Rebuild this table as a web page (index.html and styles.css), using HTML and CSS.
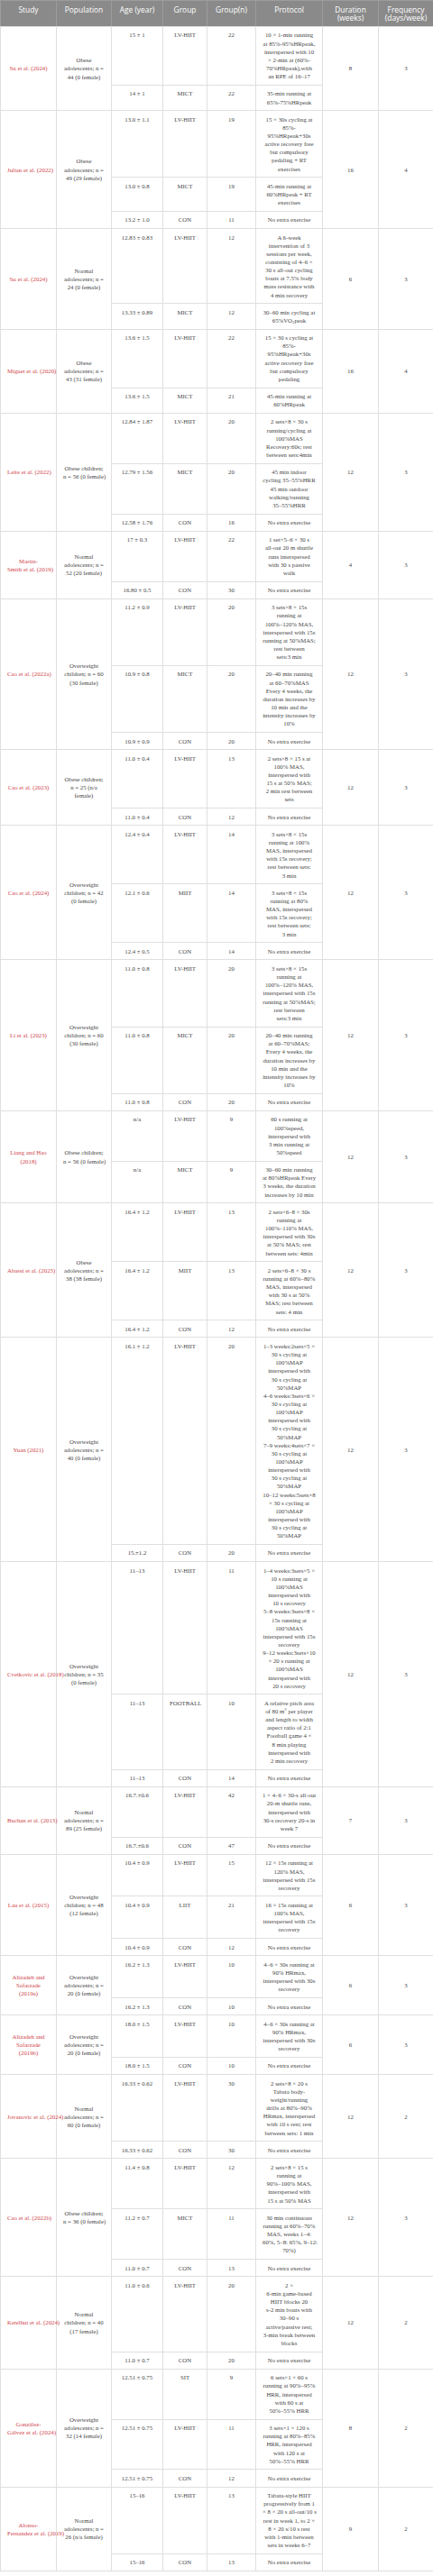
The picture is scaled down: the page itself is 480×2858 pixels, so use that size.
FILE: index.html
```html
<!DOCTYPE html>
<html lang="en">
<head>
<meta charset="utf-8">
<title>Study characteristics</title>
<link rel="stylesheet" href="styles.css">
</head>
<body>
<table class="t">
<colgroup>
<col class="w62"><col class="w61"><col class="w57"><col class="w49"><col class="w54"><col class="w74"><col class="w62"><col class="w61">
</colgroup>
<thead>
<tr><th>Study</th><th>Population</th><th>Age (year)</th><th>Group</th><th>Group(n)</th><th>Protocol</th><th>Duration<br>(weeks)</th><th>Frequency<br>(days/week)</th></tr>
</thead>
<tbody>
<tr><td rowspan="2" class="mid"><span class="ref">Su et al. (2024)</span></td><td rowspan="2" class="mid">Obese<br>adolescents; n =<br>44 (0 female)</td><td>15 ± 1</td><td>LV-HIIT</td><td>22</td><td>10 × 1-min running<br>at 85%-95%HRpeak,<br>interspersed with 10<br>× 2-min at (60%-<br>70%HRpeak),with<br>an RPE of 16–17</td><td rowspan="2" class="mid">8</td><td rowspan="2" class="mid">3</td></tr>
<tr><td>14 ± 1</td><td>MICT</td><td>22</td><td>35-min running at<br>65%-75%HRpeak</td></tr>

<tr><td rowspan="3" class="mid"><span class="ref">Julian et al. (2022)</span></td><td rowspan="3" class="mid">Obese<br>adolescents; n =<br>49 (29 female)</td><td>13.0 ± 1.1</td><td>LV-HIIT</td><td>19</td><td>15 × 30s cycling at<br>85%-<br>95%HRpeak+30s<br>active recovery free<br>but compulsory<br>pedaling + RT<br>exercises</td><td rowspan="3" class="mid">16</td><td rowspan="3" class="mid">4</td></tr>
<tr><td>13.0 ± 0.8</td><td>MICT</td><td>19</td><td>45-min running at<br>60%HRpeak + RT<br>exercises</td></tr>
<tr><td>13.2 ± 1.0</td><td>CON</td><td>11</td><td>No extra exercise</td></tr>

<tr><td rowspan="2" class="mid"><span class="ref">Su et al. (2024)</span></td><td rowspan="2" class="mid">Normal<br>adolescents; n =<br>24 (0 female)</td><td>12.83 ± 0.83</td><td>LV-HIIT</td><td>12</td><td>A 6-week<br>intervention of 3<br>sessions per week,<br>consisting of 4–6 ×<br>30 s all-out cycling<br>bouts at 7.5% body<br>mass resistance with<br>4 min recovery</td><td rowspan="2" class="mid">6</td><td rowspan="2" class="mid">3</td></tr>
<tr><td>13.33 ± 0.89</td><td>MICT</td><td>12</td><td>30–60 min cycling at<br>65%VO<span class="lo">2</span>peak</td></tr>

<tr><td rowspan="2" class="mid"><span class="ref">Miguet et al. (2020)</span></td><td rowspan="2" class="mid">Obese<br>adolescents; n =<br>43 (31 female)</td><td>13.6 ± 1.5</td><td>LV-HIIT</td><td>22</td><td>15 × 30 s cycling at<br>85%-<br>95%HRpeak+30s<br>active recovery free<br>but compulsory<br>pedaling</td><td rowspan="2" class="mid">16</td><td rowspan="2" class="mid">4</td></tr>
<tr><td>13.6 ± 1.5</td><td>MICT</td><td>21</td><td>45-min running at<br>60%HRpeak</td></tr>

<tr><td rowspan="3" class="mid"><span class="ref">Leite et al. (2022)</span></td><td rowspan="3" class="mid">Obese children;<br>n = 56 (0 female)</td><td>12.84 ± 1.87</td><td>LV-HIIT</td><td>20</td><td>2 sets×8 × 30 s<br>running/cycling at<br>100%MAS<br>Recovery:60s; rest<br>between sets:4min</td><td rowspan="3" class="mid">12</td><td rowspan="3" class="mid">3</td></tr>
<tr><td>12.79 ± 1.56</td><td>MICT</td><td>20</td><td>45 min indoor<br>cycling 35–55%HRR<br>45 min outdoor<br>walking/running<br>35–55%HRR</td></tr>
<tr><td>12.58 ± 1.76</td><td>CON</td><td>16</td><td>No extra exercise</td></tr>

<tr><td rowspan="2" class="mid"><span class="ref">Martin-<br>Smith et al. (2019)</span></td><td rowspan="2" class="mid">Normal<br>adolescents; n =<br>52 (20 female)</td><td>17 ± 0.3</td><td>LV-HIIT</td><td>22</td><td>1 set×5–6 × 30 s<br>all-out 20 m shuttle<br>runs interspersed<br>with 30 s passive<br>walk</td><td rowspan="2" class="mid">4</td><td rowspan="2" class="mid">3</td></tr>
<tr><td>16.80 ± 0.5</td><td>CON</td><td>30</td><td>No extra exercise</td></tr>

<tr><td rowspan="3" class="mid"><span class="ref">Cao et al. (2022a)</span></td><td rowspan="3" class="mid">Overweight<br>children; n = 60<br>(30 female)</td><td>11.2 ± 0.9</td><td>LV-HIIT</td><td>20</td><td>3 sets×8 × 15s<br>running at<br>100%–120% MAS,<br>interspersed with 15s<br>running at 50%MAS;<br>rest between<br>sets:3 min</td><td rowspan="3" class="mid">12</td><td rowspan="3" class="mid">3</td></tr>
<tr><td>10.9 ± 0.8</td><td>MICT</td><td>20</td><td>20–40 min running<br>at 60–70%MAS<br>Every 4 weeks, the<br>duration increases by<br>10 min and the<br>intensity increases by<br>10%</td></tr>
<tr><td>10.9 ± 0.9</td><td>CON</td><td>20</td><td>No extra exercise</td></tr>

<tr><td rowspan="2" class="mid"><span class="ref">Cao et al. (2023)</span></td><td rowspan="2" class="mid">Obese children;<br>n = 25 (n/a<br>female)</td><td>11.0 ± 0.4</td><td>LV-HIIT</td><td>13</td><td>2 sets×8 × 15 s at<br>100% MAS,<br>interspersed with<br>15 s at 50% MAS;<br>2 min rest between<br>sets</td><td rowspan="2" class="mid">12</td><td rowspan="2" class="mid">3</td></tr>
<tr><td>11.0 ± 0.4</td><td>CON</td><td>12</td><td>No extra exercise</td></tr>

<tr><td rowspan="3" class="mid"><span class="ref">Cao et al. (2024)</span></td><td rowspan="3" class="mid">Overweight<br>children; n = 42<br>(0 female)</td><td>12.4 ± 0.4</td><td>LV-HIIT</td><td>14</td><td>3 sets×8 × 15s<br>running at 100%<br>MAS, interspersed<br>with 15s recovery;<br>rest between sets:<br>3 min</td><td rowspan="3" class="mid">12</td><td rowspan="3" class="mid">3</td></tr>
<tr><td>12.1 ± 0.6</td><td>MIIT</td><td>14</td><td>3 sets×8 × 15s<br>running at 80%<br>MAS, interspersed<br>with 15s recovery;<br>rest between sets:<br>3 min</td></tr>
<tr><td>12.4 ± 0.5</td><td>CON</td><td>14</td><td>No extra exercise</td></tr>

<tr><td rowspan="3" class="mid"><span class="ref">Li et al. (2023)</span></td><td rowspan="3" class="mid">Overweight<br>children; n = 60<br>(30 female)</td><td>11.0 ± 0.8</td><td>LV-HIIT</td><td>20</td><td>3 sets×8 × 15s<br>running at<br>100%–120% MAS,<br>interspersed with 15s<br>running at 50%MAS;<br>rest between<br>sets:3 min</td><td rowspan="3" class="mid">12</td><td rowspan="3" class="mid">3</td></tr>
<tr><td>11.0 ± 0.8</td><td>MICT</td><td>20</td><td>20–40 min running<br>at 60–70%MAS;<br>Every 4 weeks, the<br>duration increases by<br>10 min and the<br>intensity increases by<br>10%</td></tr>
<tr><td>11.0 ± 0.8</td><td>CON</td><td>20</td><td>No extra exercise</td></tr>

<tr><td rowspan="2" class="mid"><span class="ref">Liang and Hao<br>(2018)</span></td><td rowspan="2" class="mid">Obese children;<br>n = 56 (0 female)</td><td>n/a</td><td>LV-HIIT</td><td>9</td><td>60 s running at<br>100%speed,<br>interspersed with<br>3 min running at<br>50%speed</td><td rowspan="2" class="mid">12</td><td rowspan="2" class="mid">3</td></tr>
<tr><td>n/a</td><td>MICT</td><td>9</td><td>30–60 min running<br>at 80%HRpeak Every<br>3 weeks, the duration<br>increases by 10 min</td></tr>

<tr><td rowspan="3" class="mid"><span class="ref">Abassi et al. (2023)</span></td><td rowspan="3" class="mid">Obese<br>adolescents; n =<br>38 (38 female)</td><td>16.4 ± 1.2</td><td>LV-HIIT</td><td>13</td><td>2 sets×6–8 × 30s<br>running at<br>100%–110% MAS,<br>interspersed with 30s<br>at 50% MAS; rest<br>between sets: 4min</td><td rowspan="3" class="mid">12</td><td rowspan="3" class="mid">3</td></tr>
<tr><td>16.4 ± 1.2</td><td>MIIT</td><td>13</td><td>2 sets×6–8 × 30 s<br>running at 60%–80%<br>MAS, interspersed<br>with 30 s at 50%<br>MAS; rest between<br>sets: 4 min</td></tr>
<tr><td>16.4 ± 1.2</td><td>CON</td><td>12</td><td>No extra exercise</td></tr>

<tr><td rowspan="2" class="mid"><span class="ref">Yuan (2021)</span></td><td rowspan="2" class="mid">Overweight<br>adolescents; n =<br>40 (0 female)</td><td>16.1 ± 1.2</td><td>LV-HIIT</td><td>20</td><td>1–3 weeks:2sets×5 ×<br>30 s cycling at<br>100%MAP<br>interspersed with<br>30 s cycling at<br>50%MAP<br>4–6 weeks:3sets×6 ×<br>30 s cycling at<br>100%MAP<br>interspersed with<br>30 s cycling at<br>50%MAP<br>7–9 weeks:4sets×7 ×<br>30 s cycling at<br>100%MAP<br>interspersed with<br>30 s cycling at<br>50%MAP<br>10–12 weeks:5sets×8<br>× 30 s cycling at<br>100%MAP<br>interspersed with<br>30 s cycling at<br>50%MAP</td><td rowspan="2" class="mid">12</td><td rowspan="2" class="mid">3</td></tr>
<tr><td>15.±1.2</td><td>CON</td><td>20</td><td>No extra exercise</td></tr>

<tr><td rowspan="3" class="mid"><span class="ref">Cvetkovic et al. (2018)</span></td><td rowspan="3" class="mid">Overweight<br>children; n = 35<br>(0 female)</td><td>11–13</td><td>LV-HIIT</td><td>11</td><td>1–4 weeks:3sets×5 ×<br>10 s running at<br>100%MAS<br>interspersed with<br>10 s recovery<br>5–8 weeks:3sets×8 ×<br>15s running at<br>100%MAS<br>interspersed with 15s<br>recovery<br>9–12 weeks:3sets×10<br>× 20 s running at<br>100%MAS<br>interspersed with<br>20 s recovery</td><td rowspan="3" class="mid">12</td><td rowspan="3" class="mid">3</td></tr>
<tr><td>11–13</td><td>FOOTBALL</td><td>10</td><td>A relative pitch area<br>of 80 m<span class="hi">2</span> per player<br>and length to width<br>aspect ratio of 2:1<br>Football game 4 ×<br>8 min playing<br>interspersed with<br>2 min recovery</td></tr>
<tr><td>11–13</td><td>CON</td><td>14</td><td>No extra exercise</td></tr>

<tr><td rowspan="2" class="mid"><span class="ref">Buchan et al. (2013)</span></td><td rowspan="2" class="mid">Normal<br>adolescents; n =<br>89 (25 female)</td><td>16.7.±0.6</td><td>LV-HIIT</td><td>42</td><td>1 × 4–6 × 30-s all-out<br>20-m shuttle runs,<br>interspersed with<br>30-s recovery 20-s in<br>week 7</td><td rowspan="2" class="mid">7</td><td rowspan="2" class="mid">3</td></tr>
<tr><td>16.7.±0.6</td><td>CON</td><td>47</td><td>No extra exercise</td></tr>

<tr><td rowspan="3" class="mid"><span class="ref">Lau et al. (2015)</span></td><td rowspan="3" class="mid">Overweight<br>children; n = 48<br>(12 female)</td><td>10.4 ± 0.9</td><td>LV-HIIT</td><td>15</td><td>12 × 15s running at<br>120% MAS,<br>interspersed with 15s<br>recovery</td><td rowspan="3" class="mid">6</td><td rowspan="3" class="mid">3</td></tr>
<tr><td>10.4 ± 0.9</td><td>LIIT</td><td>21</td><td>16 × 15s running at<br>100% MAS,<br>interspersed with 15s<br>recovery</td></tr>
<tr><td>10.4 ± 0.9</td><td>CON</td><td>12</td><td>No extra exercise</td></tr>

<tr><td rowspan="2" class="mid"><span class="ref">Alizadeh and<br>Safarzade<br>(2019a)</span></td><td rowspan="2" class="mid">Overweight<br>adolescents; n =<br>20 (0 female)</td><td>16.2 ± 1.3</td><td>LV-HIIT</td><td>10</td><td>4–6 × 30s running at<br>90% HRmax,<br>interspersed with 30s<br>recovery</td><td rowspan="2" class="mid">6</td><td rowspan="2" class="mid">3</td></tr>
<tr><td>16.2 ± 1.3</td><td>CON</td><td>10</td><td>No extra exercise</td></tr>

<tr><td rowspan="2" class="mid"><span class="ref">Alizadeh and<br>Safarzade<br>(2019b)</span></td><td rowspan="2" class="mid">Overweight<br>adolescents; n =<br>20 (0 female)</td><td>18.0 ± 1.5</td><td>LV-HIIT</td><td>10</td><td>4–6 × 30s running at<br>90% HRmax,<br>interspersed with 30s<br>recovery</td><td rowspan="2" class="mid">6</td><td rowspan="2" class="mid">3</td></tr>
<tr><td>18.0 ± 1.5</td><td>CON</td><td>10</td><td>No extra exercise</td></tr>

<tr><td rowspan="2" class="mid"><span class="ref">Jovanovic et al. (2024)</span></td><td rowspan="2" class="mid">Normal<br>adolescents; n =<br>60 (0 female)</td><td>16.33 ± 0.62</td><td>LV-HIIT</td><td>30</td><td>2 sets×8 × 20 s<br>Tabata body-<br>weight/running<br>drills at 80%–90%<br>HRmax, interspersed<br>with 10 s rest; rest<br>between sets: 1 min</td><td rowspan="2" class="mid">12</td><td rowspan="2" class="mid">2</td></tr>
<tr><td>16.33 ± 0.62</td><td>CON</td><td>30</td><td>No extra exercise</td></tr>

<tr><td rowspan="3" class="mid"><span class="ref">Cao et al. (2022b)</span></td><td rowspan="3" class="mid">Obese children;<br>n = 36 (0 female)</td><td>11.4 ± 0.8</td><td>LV-HIIT</td><td>12</td><td>2 sets×8 × 15 s<br>running at<br>90%–100% MAS,<br>interspersed with<br>15 s at 50% MAS</td><td rowspan="3" class="mid">12</td><td rowspan="3" class="mid">3</td></tr>
<tr><td>11.2 ± 0.7</td><td>MICT</td><td>11</td><td>30 min continuous<br>running at 60%–70%<br>MAS, weeks 1–4:<br>60%, 5–8: 65%, 9–12:<br>70%)</td></tr>
<tr><td>11.0 ± 0.7</td><td>CON</td><td>13</td><td>No extra exercise</td></tr>

<tr><td rowspan="2" class="mid"><span class="ref">Ketelhut et al. (2024)</span></td><td rowspan="2" class="mid">Normal<br>children; n = 40<br>(17 female)</td><td>11.0 ± 0.6</td><td>LV-HIIT</td><td>20</td><td>2 ×<br>6-min game-based<br>HIIT blocks 20<br>s-2 min bouts with<br>30–90 s<br>active/passive rest;<br>3-min break between<br>blocks</td><td rowspan="2" class="mid">12</td><td rowspan="2" class="mid">2</td></tr>
<tr><td>11.0 ± 0.7</td><td>CON</td><td>20</td><td>No extra exercise</td></tr>

<tr><td rowspan="3" class="mid"><span class="ref">González-<br>Gálvez et al. (2024)</span></td><td rowspan="3" class="mid">Overweight<br>adolescents; n =<br>32 (14 female)</td><td>12.51 ± 0.75</td><td>SIT</td><td>9</td><td>6 sets×1 × 60 s<br>running at 90%–95%<br>HRR, interspersed<br>with 60 s at<br>50%–55% HRR</td><td rowspan="3" class="mid">8</td><td rowspan="3" class="mid">2</td></tr>
<tr><td>12.51 ± 0.75</td><td>LV-HIIT</td><td>11</td><td>3 sets×1 × 120 s<br>running at 80%–85%<br>HRR, interspersed<br>with 120 s at<br>50%–55% HRR</td></tr>
<tr><td>12.51 ± 0.75</td><td>CON</td><td>12</td><td>No extra exercise</td></tr>

<tr><td rowspan="2" class="mid"><span class="ref">Alonso-<br>Fernandez et al. (2019)</span></td><td rowspan="2" class="mid">Normal<br>adolescents; n =<br>26 (n/a female)</td><td>15–16</td><td>LV-HIIT</td><td>13</td><td>Tabata-style HIIT<br>progressively from 1<br>× 8 × 20 s all-out/10 s<br>rest in week 1, to 2 ×<br>8 × 20 s/10 s rest<br>with 1-min between<br>sets in weeks 6–7</td><td rowspan="2" class="mid">9</td><td rowspan="2" class="mid">2</td></tr>
<tr><td>15–16</td><td>CON</td><td>13</td><td>No extra exercise</td></tr>
</tbody>
</table>
</body>
</html>
```
FILE: styles.css
```css
html, body {
  margin: 0;
  padding: 0;
  background: #ffffff;
}

.t {
  width: 480px;
  table-layout: fixed;
  border-collapse: collapse;
  font-family: "Liberation Serif", "Times New Roman", serif;
  font-size: 6.8px;
  line-height: 9.14px;
  color: #474747;
}

.w62 { width: 62px; }
.w61 { width: 61px; }
.w57 { width: 57px; }
.w49 { width: 49px; }
.w54 { width: 54px; }
.w74 { width: 74px; }

.t th {
  background: #8a8a8a;
  color: #ffffff;
  font-family: "Open Sans", "Liberation Sans", sans-serif;
  font-weight: 400;
  font-size: 8.4px;
  line-height: 9.3px;
  padding: 5px 2px 4.3px;
  text-align: center;
  vertical-align: top;
  white-space: nowrap;
  border: 1px solid #9c9c9c;
  border-bottom-color: #dedede;
}

.t td {
  border: 1px solid #dfdfdf;
  padding: 4.55px 7px;
  text-align: center;
  vertical-align: top;
  white-space: nowrap;
}

.t td.mid {
  vertical-align: middle;
}

.ref {
  color: #d0454c;
}

.lo {
  font-size: 0.7em;
  line-height: 0;
  vertical-align: -0.3em;
}

.hi {
  font-size: 0.7em;
  line-height: 0;
  vertical-align: 0.55em;
}
```
